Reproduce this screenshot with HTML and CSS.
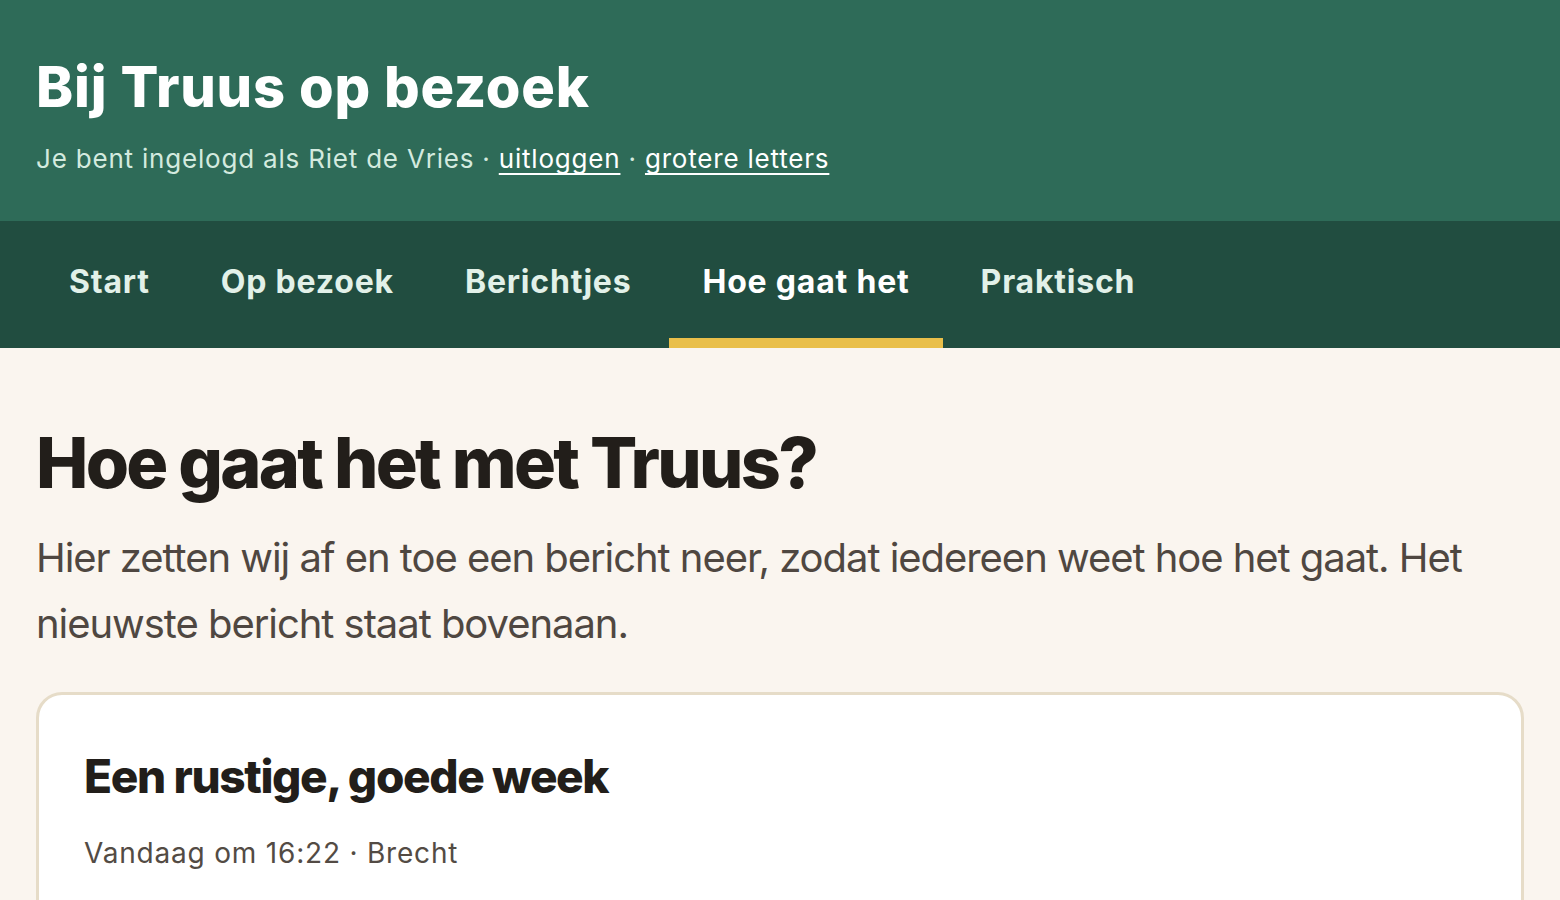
FILE: index.html
```html
<!DOCTYPE html>
<html lang="nl">
<head>
<meta charset="utf-8">
<title>Bij Truus op bezoek</title>
<link rel="stylesheet" href="styles.css">
</head>
<body>
<header class="site-header">
  <h1 class="site-title">Bij Truus op bezoek</h1>
  <p class="site-user">Je bent ingelogd als Riet de Vries · <a href="#">uitloggen</a> · <a href="#">grotere letters</a></p>
</header>
<nav class="main-nav">
  <a class="nav-item" href="#">Start</a>
  <a class="nav-item" href="#">Op bezoek</a>
  <a class="nav-item" href="#">Berichtjes</a>
  <a class="nav-item is-active" href="#">Hoe gaat het</a>
  <a class="nav-item" href="#">Praktisch</a>
</nav>
<main class="content">
  <h2 class="page-title">Hoe gaat het met Truus?</h2>
  <p class="page-intro">Hier zetten wij af en toe een bericht neer, zodat iedereen weet hoe het gaat. Het nieuwste bericht staat bovenaan.</p>
  <article class="card">
    <h3 class="card-title">Een rustige, goede week</h3>
    <p class="card-meta">Vandaag om 16:22 · Brecht</p>
  </article>
</main>
</body>
</html>
```
FILE: styles.css
```css
* { box-sizing: border-box; }
html, body { margin: 0; padding: 0; }
body {
  font-family: "Inter", "Noto Sans", sans-serif;
  background: #faf5ef;
  color: #221e1a;
  overflow: hidden;
}
.site-header {
  background: #2e6b58;
  padding: 54px 36px 44px;
}
.site-title {
  margin: 0;
  font-size: 56px;
  line-height: 1.2;
  font-weight: 800;
  letter-spacing: 0.8px;
  color: #ffffff;
}
.site-user {
  margin: 20px 0 0;
  font-size: 26px;
  line-height: 36px;
  letter-spacing: 0.8px;
  color: #d3eadf;
}
.site-user a {
  color: #ffffff;
  text-decoration: underline;
  text-underline-offset: 5px;
  text-decoration-thickness: 2px;
}
.main-nav {
  background: #214d40;
  display: flex;
  gap: 5px;
  padding: 0 36px;
}
.nav-item {
  padding: 41px 33px 46px;
  font-size: 32px;
  line-height: 40px;
  font-weight: 700;
  letter-spacing: 0.8px;
  color: #e2f1e9;
  text-decoration: none;
}
.nav-item.is-active {
  color: #ffffff;
  box-shadow: inset 0 -10px 0 #e9bf4a;
}
.content {
  padding: 75px 36px 0;
}
.page-title {
  margin: 0;
  font-size: 70px;
  line-height: 80px;
  font-weight: 800;
  letter-spacing: -2.7px;
  color: #221e1a;
}
.page-intro {
  margin: 22px 0 0;
  font-size: 40px;
  line-height: 1.64;
  letter-spacing: -1.05px;
  color: #4f4741;
}
.card {
  margin-top: 36px;
  background: #ffffff;
  border: 3px solid #e6dcc8;
  border-radius: 26px;
  padding: 54px 45px 60px;
}
.card-title {
  margin: 0;
  font-size: 46px;
  line-height: 1.2;
  font-weight: 800;
  letter-spacing: -0.03em;
  color: #221e1a;
}
.card-meta {
  margin: 29px 0 0;
  font-size: 28px;
  line-height: 39px;
  letter-spacing: 0.8px;
  color: #534b44;
}
```
